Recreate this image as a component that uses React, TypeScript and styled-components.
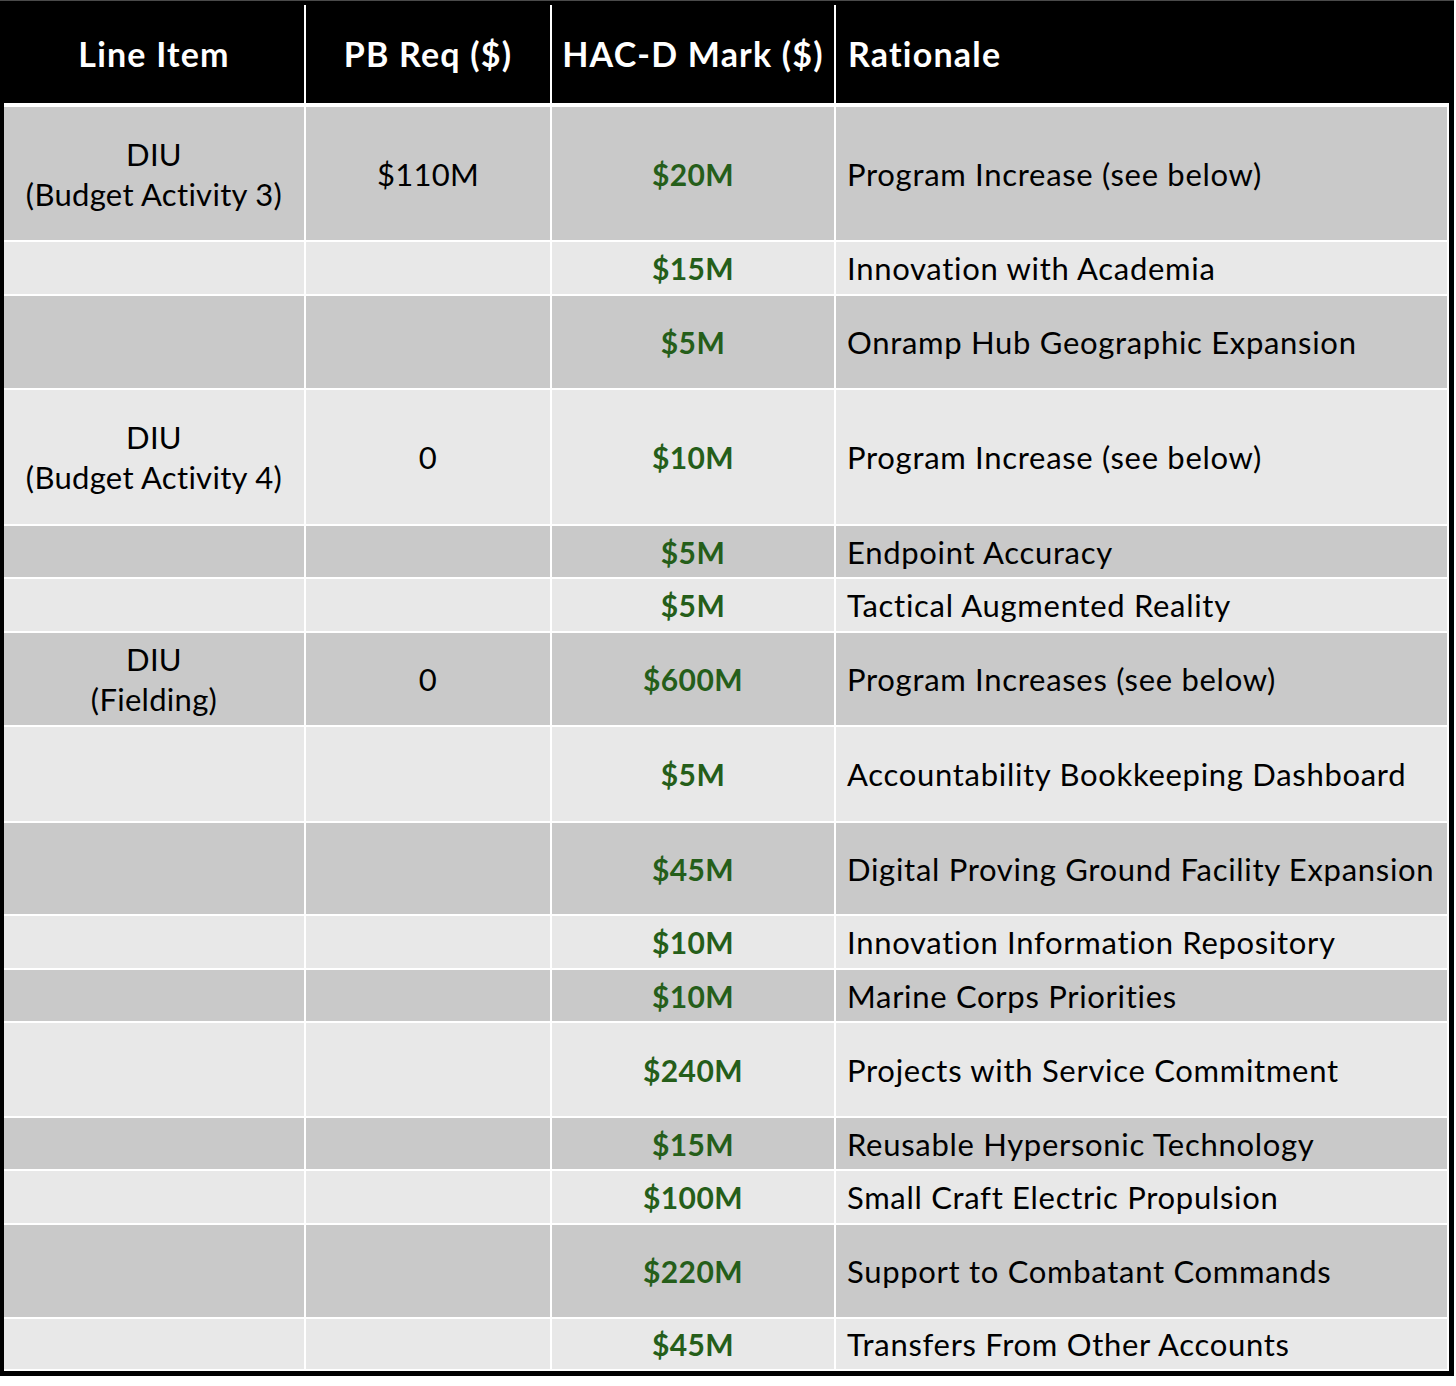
import React from "react";
import styled, { createGlobalStyle } from "styled-components";

const Global = createGlobalStyle`
  html, body { margin: 0; padding: 0; background: #ffffff; }
  body { font-family: "Lato", "Noto Sans", sans-serif; }
`;

const Frame = styled.div`
  width: 1454px;
  box-sizing: border-box;
  border-top: 1px solid #4a4a4a;
`;

const Table = styled.div`
  box-sizing: border-box;
  width: 1454px;
  background: #000;
  border-style: solid;
  border-color: #000;
  border-width: 4px 5px 5px 4px;
`;

const COLS = "302px 246px 284px 613px";

const HeaderRow = styled.div`
  display: grid;
  grid-template-columns: ${COLS};
  height: 102px;
  box-sizing: border-box;
  border-bottom: 4px solid #fff;
`;

const HeadCell = styled.div<{ $left?: boolean; $last?: boolean }>`
  display: flex;
  align-items: center;
  justify-content: ${(p) => (p.$left ? "flex-start" : "center")};
  padding: ${(p) => (p.$left ? "0 0 0 12px" : "0")};
  box-sizing: border-box;
  border-right: ${(p) => (p.$last ? "none" : "2px solid #fff")};
  color: #fff;
  font-weight: 700;
  font-size: 34px;
  letter-spacing: 1.2px;
  padding-bottom: 2px;
  white-space: nowrap;
`;

const Row = styled.div<{ $h: number; $dark: boolean }>`
  display: grid;
  grid-template-columns: ${COLS};
  height: ${(p) => p.$h}px;
  background: ${(p) => (p.$dark ? "#c9c9c9" : "#e8e8e8")};
`;

const Cell = styled.div<{ $align?: "left" | "center" }>`
  display: flex;
  flex-direction: column;
  align-items: ${(p) => (p.$align === "left" ? "flex-start" : "center")};
  justify-content: center;
  padding: ${(p) => (p.$align === "left" ? "0 0 0 11px" : "0")};
  box-sizing: border-box;
  border-right: 2px solid #fff;
  border-bottom: 2px solid #fff;
  color: #000;
  font-size: 31px;
  line-height: 40px;
  text-align: center;
  white-space: nowrap;
  letter-spacing: ${(p) => (p.$align === "left" ? "0.7px" : "0.3px")};
`;

const Mark = styled(Cell)`
  color: #255e1a;
  font-weight: 700;
  font-size: 30px;
  letter-spacing: 0.4px;
`;

type R = {
  h: number;
  item?: [string, string];
  pb?: string;
  mark: string;
  why: string;
};

const rows: R[] = [
  { h: 135, item: ["DIU", "(Budget Activity 3)"], pb: "$110M", mark: "$20M", why: "Program Increase (see below)" },
  { h: 54, mark: "$15M", why: "Innovation with Academia" },
  { h: 94, mark: "$5M", why: "Onramp Hub Geographic Expansion" },
  { h: 136, item: ["DIU", "(Budget Activity 4)"], pb: "0", mark: "$10M", why: "Program Increase (see below)" },
  { h: 53, mark: "$5M", why: "Endpoint Accuracy" },
  { h: 54, mark: "$5M", why: "Tactical Augmented Reality" },
  { h: 94, item: ["DIU", "(Fielding)"], pb: "0", mark: "$600M", why: "Program Increases (see below)" },
  { h: 96, mark: "$5M", why: "Accountability Bookkeeping Dashboard" },
  { h: 93, mark: "$45M", why: "Digital Proving Ground Facility Expansion" },
  { h: 54, mark: "$10M", why: "Innovation Information Repository" },
  { h: 53, mark: "$10M", why: "Marine Corps Priorities" },
  { h: 95, mark: "$240M", why: "Projects with Service Commitment" },
  { h: 53, mark: "$15M", why: "Reusable Hypersonic Technology" },
  { h: 54, mark: "$100M", why: "Small Craft Electric Propulsion" },
  { h: 94, mark: "$220M", why: "Support to Combatant Commands" },
  { h: 52, mark: "$45M", why: "Transfers From Other Accounts" },
];

export default function App() {
  return (
    <>
      <Global />
      <Frame>
        <Table>
          <HeaderRow>
            <HeadCell>Line Item</HeadCell>
            <HeadCell>PB Req ($)</HeadCell>
            <HeadCell>HAC-D Mark ($)</HeadCell>
            <HeadCell $left $last>Rationale</HeadCell>
          </HeaderRow>
          {rows.map((r, i) => (
            <Row key={i} $h={r.h} $dark={i % 2 === 0}>
              <Cell>
                {r.item && (
                  <>
                    <span>{r.item[0]}</span>
                    <span>{r.item[1]}</span>
                  </>
                )}
              </Cell>
              <Cell>{r.pb}</Cell>
              <Mark>{r.mark}</Mark>
              <Cell $align="left">{r.why}</Cell>
            </Row>
          ))}
        </Table>
      </Frame>
    </>
  );
}
